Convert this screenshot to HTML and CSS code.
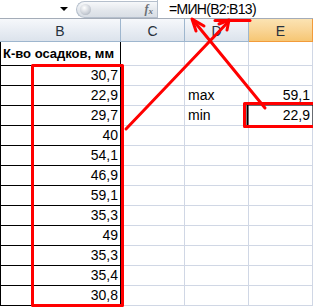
FILE: index.html
```html
<!DOCTYPE html>
<html lang="en">
<head>
    <meta charset="UTF-8">
    <title>МИН</title>
    <link rel="stylesheet" href="styles.css">
</head>
<body>

    <div class="formula-bar">
        <div class="name-box"><span class="drop"></span></div>
        <div class="pill">
            <span class="knob"></span>
            <span class="fx">f<sub>x</sub></span>
        </div>
        <div class="formula">=МИН(B2:B13)</div>
    </div>

    <div class="sheet">
        <div class="hd">B</div>
        <div class="hd">C</div>
        <div class="hd">D</div>
        <div class="hd active">E</div>

        <div class="cell b title">К-во осадков, мм</div><div class="cell"></div><div class="cell"></div><div class="cell"></div>
        <div class="cell b num">30,7</div><div class="cell"></div><div class="cell"></div><div class="cell"></div>
        <div class="cell b num">22,9</div><div class="cell"></div><div class="cell">max</div><div class="cell num">59,1</div>
        <div class="cell b num">29,7</div><div class="cell"></div><div class="cell">min</div><div class="cell num">22,9</div>
        <div class="cell b num">40</div><div class="cell"></div><div class="cell"></div><div class="cell"></div>
        <div class="cell b num">54,1</div><div class="cell"></div><div class="cell"></div><div class="cell"></div>
        <div class="cell b num">46,9</div><div class="cell"></div><div class="cell"></div><div class="cell"></div>
        <div class="cell b num">59,1</div><div class="cell"></div><div class="cell"></div><div class="cell"></div>
        <div class="cell b num">35,3</div><div class="cell"></div><div class="cell"></div><div class="cell"></div>
        <div class="cell b num">49</div><div class="cell"></div><div class="cell"></div><div class="cell"></div>
        <div class="cell b num">35,3</div><div class="cell"></div><div class="cell"></div><div class="cell"></div>
        <div class="cell b num">35,4</div><div class="cell"></div><div class="cell"></div><div class="cell"></div>
        <div class="cell b num">30,8</div><div class="cell"></div><div class="cell"></div><div class="cell"></div>
    </div>

    <!-- annotations drawn over the sheet -->
    <svg class="marks" width="313" height="307" viewBox="0 0 313 307">
        <rect x="247.5" y="104.5" width="66" height="22" fill="none" stroke="#000" stroke-width="2"/>
        <g fill="none" stroke="#f00" stroke-width="3" stroke-linecap="round" stroke-linejoin="round">
            <rect x="32.5" y="65.5" width="90" height="240" stroke-linecap="butt"/>
            <rect x="244.5" y="103.5" width="70" height="23" stroke-linecap="butt"/>
            <line x1="215" y1="20.5" x2="250" y2="20.5"/>
            <line x1="126" y1="129" x2="229" y2="21"/>
            <polyline points="219,24 229,20 227,30"/>
            <line x1="265" y1="108" x2="193" y2="20"/>
            <polyline points="196,31 192,19 204,26"/>
        </g>
    </svg>

</body>
</html>
```

FILE: styles.css
```css
* { box-sizing: border-box; margin: 0; padding: 0; }
body { position: relative; width: 313px; height: 307px; overflow: hidden; background: #fff; font-family: "Liberation Sans", Arial, sans-serif; color: #000; }

.formula-bar { display: flex; height: 19px; border-bottom: 1px solid #a4acb8; background: #fff; }
.name-box { width: 76px; display: flex; justify-content: flex-end; align-items: center; padding-right: 8px; }
.drop { width: 0; height: 0; border-left: 4px solid transparent; border-right: 4px solid transparent; border-top: 4px solid #000; }
.pill {
    width: 81px; height: 17px; margin-top: 1px;
    display: flex; align-items: center; justify-content: space-between; padding: 0 4px 0 3px;
    border: 1px solid #b5bfcc; border-right: none; border-radius: 9px 0 0 9px;
    background: linear-gradient(#f7f8fa, #e3e7ec 55%, #d9dee5);
}
.knob { width: 11px; height: 11px; border-radius: 50%; background: radial-gradient(circle at 40% 35%, #fff, #c9ced6 60%, #9aa3ae); }
.fx { font-family: "Liberation Serif", serif; font-style: italic; font-weight: bold; font-size: 12px; color: #6b6f75; }
.fx sub { font-size: 9px; vertical-align: -1px; }
.formula { flex: 1; border-left: 1px solid #b5bfcc; padding-left: 11px; font-size: 14px; line-height: 18px; letter-spacing: -0.7px; }

.sheet {
    display: grid;
    grid-template-columns: 121px 64px 64px 64px;
    grid-template-rows: 23px 24px repeat(12, 20px);
    font-size: 14px;
}
.hd {
    display: flex; justify-content: center; align-items: center; padding-top: 2px;
    border-right: 1px solid #9eb6ce; border-bottom: 1px solid #9eb6ce;
    background: linear-gradient(#f6f8fb, #e6ebf2 60%, #dce3ec);
    color: #27313d; font-size: 14px;
}
.hd.active { background: linear-gradient(#fbe3b3, #f9d596 50%, #f6c673); border-color: #f29b3a; }

.cell {
    display: flex; align-items: flex-end; padding: 0 2px 2px 3px; line-height: 16px;
    border-right: 1px solid #d0d7e5; border-bottom: 1px solid #d0d7e5;
}
.cell.b { border-left: 1px solid #000; border-right-color: #000; border-bottom-color: #000; }
.cell.num { justify-content: flex-end; }
.cell.title { font-weight: bold; font-size: 13px; padding-left: 2px; padding-bottom: 3px; white-space: nowrap; }

.marks { position: absolute; top: 0; left: 0; }
```
